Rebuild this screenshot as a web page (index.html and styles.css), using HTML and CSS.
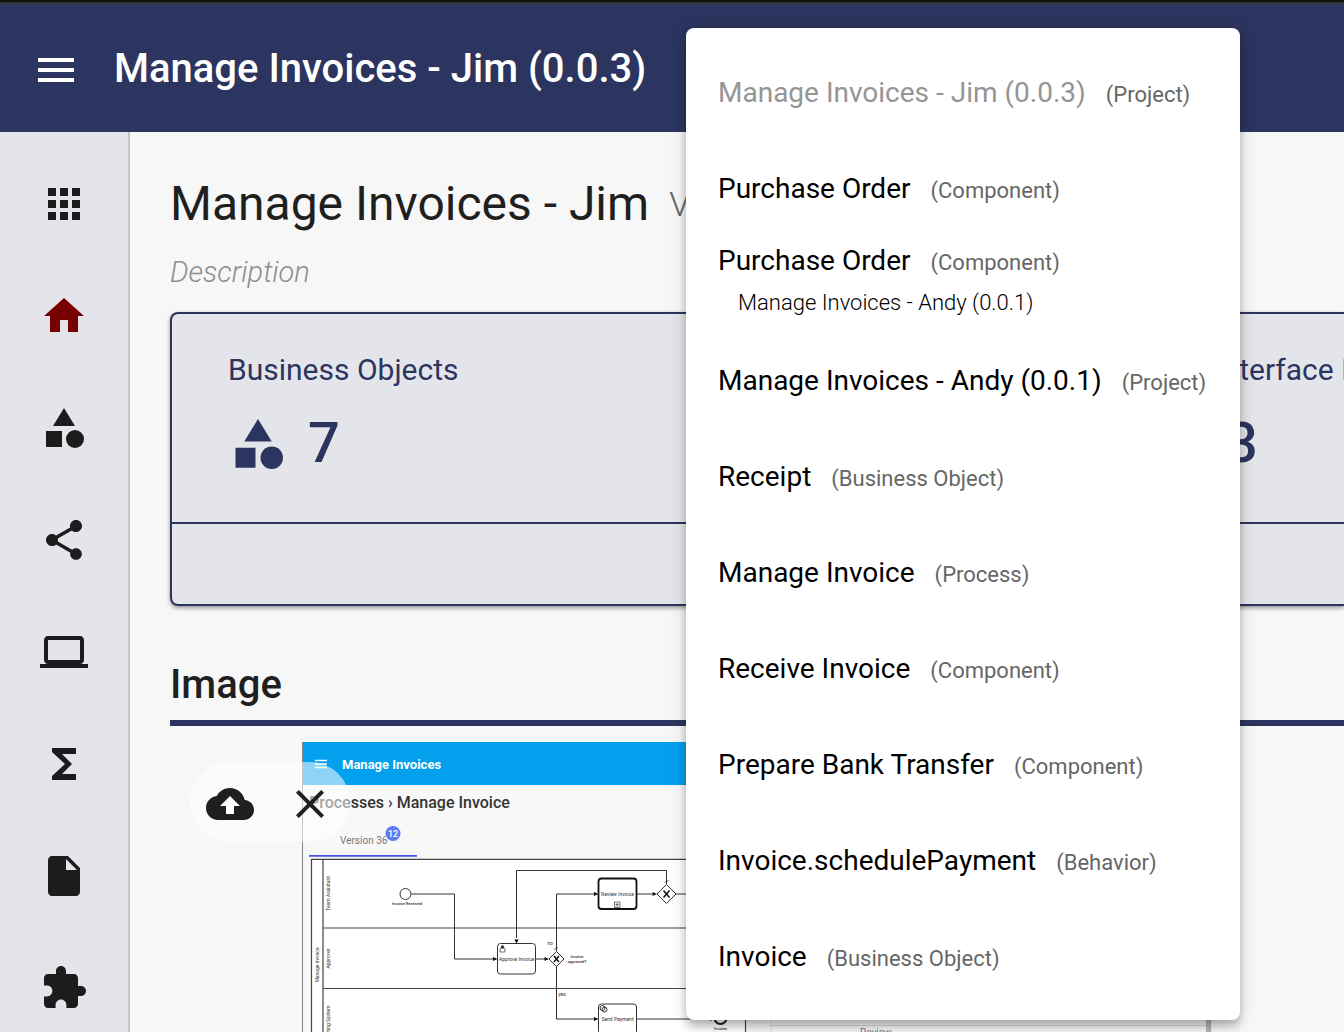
FILE: index.html
```html
<!DOCTYPE html>
<html lang="en">
<head>
<meta charset="utf-8">
<meta name="viewport" content="width=device-width, initial-scale=1">
<title>Manage Invoices - Jim (0.0.3)</title>
<link rel="stylesheet" href="styles.css">
</head>
<body>
<header class="topbar">
  <button class="icon-button" type="button" aria-label="Open menu"><svg class="icon" viewBox="0 0 24 24"><path d="M3 18h18v-2H3v2zm0-5h18v-2H3v2zm0-7v2h18V6H3z"/></svg></button>
  <span class="project-name">Manage Invoices - Jim (0.0.3)</span>
</header>

<div class="layout">
  <nav class="rail" aria-label="Sections">
    <a class="rail-link" href="#apps" aria-label="Apps"><svg class="icon" viewBox="0 0 24 24"><path d="M4 8h4V4H4v4zm6 12h4v-4h-4v4zm-6 0h4v-4H4v4zm0-6h4v-4H4v4zm6 0h4v-4h-4v4zm6-10v4h4V4h-4zm-6 4h4V4h-4v4zm6 6h4v-4h-4v4zm0 6h4v-4h-4v4z"/></svg></a>
    <a class="rail-link current" href="#home" aria-label="Home"><svg class="icon" viewBox="0 0 24 24"><path d="M10 20v-6h4v6h5v-8h3L12 3 2 12h3v8z"/></svg></a>
    <a class="rail-link" href="#objects" aria-label="Business objects"><svg class="icon" viewBox="0 0 24 24"><path d="M12 2l-5.5 9h11z"/><circle cx="17.5" cy="17.5" r="4.5"/><path d="M3 13.5h8v8H3z"/></svg></a>
    <a class="rail-link" href="#processes" aria-label="Processes"><svg class="icon" viewBox="0 0 24 24"><path d="M18 16.08c-.76 0-1.44.3-1.96.77L8.91 12.7c.05-.23.09-.46.09-.7s-.04-.47-.09-.7l7.05-4.11c.54.5 1.25.81 2.04.81 1.66 0 3-1.34 3-3s-1.34-3-3-3-3 1.34-3 3c0 .24.04.47.09.7L8.04 9.81C7.5 9.31 6.79 9 6 9c-1.66 0-3 1.34-3 3s1.34 3 3 3c.79 0 1.5-.31 2.04-.81l7.12 4.16c-.05.21-.08.43-.08.65 0 1.61 1.31 2.92 2.92 2.92s2.92-1.31 2.92-2.92-1.31-2.92-2.92-2.92z"/></svg></a>
    <a class="rail-link" href="#interfaces" aria-label="User interfaces"><svg class="icon" viewBox="0 0 24 24"><path d="M20 18c1.1 0 1.99-.9 1.99-2L22 6c0-1.100-.9-2-2-2H4c-1.100 0-2 .9-2 2v10c0 1.100.9 2 2 2H0v2h24v-2h-4zM4 6h16v10H4V6z"/></svg></a>
    <a class="rail-link" href="#behaviors" aria-label="Behaviors"><svg class="icon" viewBox="0 0 24 24"><path d="M18 4H6v2l6.500 6L6 18v2h12v-3h-7l5-5-5-5h7z"/></svg></a>
    <a class="rail-link" href="#documents" aria-label="Documents"><svg class="icon" viewBox="0 0 24 24"><path d="M6 2c-1.100 0-1.990.9-1.990 2L4 20c0 1.100.89 2 1.990 2H18c1.100 0 2-.9 2-2V8l-6-6H6zm7 7V3.500L18.500 9H13z"/></svg></a>
    <a class="rail-link" href="#extensions" aria-label="Extensions"><svg class="icon" viewBox="0 0 24 24"><path d="M20.500 11H19V7c0-1.100-.9-2-2-2h-4V3.500C13 2.120 11.880 1 10.500 1S8 2.120 8 3.500V5H4c-1.100 0-1.990.9-1.990 2v3.800H3.500c1.490 0 2.700 1.210 2.700 2.700s-1.210 2.700-2.700 2.700H2V20c0 1.100.9 2 2 2h3.800v-1.500c0-1.490 1.210-2.700 2.700-2.700 1.490 0 2.700 1.210 2.700 2.700V22H17c1.100 0 2-.9 2-2v-4h1.500c1.380 0 2.500-1.120 2.500-2.500S21.880 11 20.500 11z"/></svg></a>
  </nav>

  <main class="content">
    <div class="title-row">
      <h1 class="title">Manage Invoices - Jim</h1>
      <span class="version">V</span>
    </div>
    <p class="description">Description</p>

    <section class="card">
      <div class="stats">
        <div class="stat">
          <h2 class="stat-name">Business Objects</h2>
          <div class="stat-value"><svg class="stat-icon" viewBox="0 0 24 24"><path d="M12 2l-5.500 9h11z"/><circle cx="17.500" cy="17.500" r="4.500"/><path d="M3 13.500h8v8H3z"/></svg><span>7</span></div>
        </div>
        <div class="stat">
          <h2 class="stat-name">User Interface Flows</h2>
          <div class="stat-value"><svg class="stat-icon" viewBox="0 0 24 24"><path d="M20 18c1.100 0 2-.9 2-2V6c0-1.100-.9-2-2-2H4c-1.100 0-2 .9-2 2v10c0 1.100.9 2 2 2H0v2h24v-2h-4zM4 6h16v10H4V6z"/></svg><span>3</span></div>
        </div>
      </div>
      <div class="card-footer"></div>
    </section>

    <h2 class="section-title">Image</h2>
    <div class="image-area">
      <svg class="diagram" viewBox="302 742 910 290" role="img" aria-label="Manage Invoice process">
        <path fill="#f8f8f8" d="M302 742h912v290H302z"/>
        <path fill="#03a0ee" d="M302 742h912v43H302z"/>
        <path stroke="#7c868c" d="M302.500 742v290"/>
        <path stroke="#fff" stroke-width="1.300" d="M315 760.500h12M315 764h12M315 767.500h12"/>
        <text class="app-name" x="342" y="769">Manage Invoices</text>
        <text class="crumbs" x="309" y="808">Processes › Manage Invoice</text>
        <text class="tab" x="340" y="844">Version 36</text>
        <circle cx="393" cy="833.500" r="7.500" fill="#5f79f2"/>
        <text class="badge" x="393" y="837">12</text>
        <path fill="#4653e6" d="M309 855h108v1.800H309z"/>
        <path fill="#fff" stroke="#444" stroke-width="1.200" d="M311.500 859.300h434v190h-434z"/>
        <g fill="none" stroke="#444" stroke-width="1.200">
          <path d="M323 859v180M323 928h422M323 988.500h422"/>
        </g>
        <g fill="none" stroke="#333">
          <path d="M411.500 894h43v65H493M516.500 938v-67.500h150V884M535.500 959H546M556.500 951.500V894h38M556.500 966.500V1019h38M636.500 894H652M676 894h40M636.500 1019H715"/>
          <circle cx="405.500" cy="894" r="5.500" fill="#fff"/>
          <rect x="497.500" y="943.500" width="38" height="30.500" rx="3" fill="#fff"/>
          <rect x="598.500" y="878.500" width="38" height="30.500" rx="3" fill="#fff" stroke="#111" stroke-width="1.800"/>
          <rect x="598.500" y="1004" width="38" height="30.500" rx="3" fill="#fff"/>
          <path fill="#fff" d="M549 959l7.500-7.500 7.500 7.500-7.500 7.500zM657 894l9.500-9.500 9.500 9.500-9.500 9.500z"/>
          <path stroke="#111" stroke-width="1.500" d="M554 956l5 6m0-6l-5 6M663.500 890.500l6 7m0-7l-6 7"/>
          <path stroke-width=".7" d="M614.500 902h5.500v5.500h-5.500zM617.200 903v3.500M615.500 904.700h3.500M554 949.500l4-2M664.500 882.500l4-2M500 952v-3l1.500-1h2l1.500 1v3z"/>
          <circle cx="502.500" cy="947" r="1.300" fill="#333"/>
          <circle cx="602.500" cy="1008" r="2.500"/><circle cx="604.500" cy="1009.500" r="2.500"/>
          <circle cx="720.500" cy="1018" r="6" stroke="#222" stroke-width="2"/>
        </g>
        <path fill="#111" d="M493 957l4.500 2-4.500 2zM514.300 939.500h4.400l-2.200 4zM544.500 957l4.500 2-4.500 2zM594 892l4.500 2-4.500 2zM652.500 892l4.500 2-4.500 2zM594 1017l4.500 2-4.500 2zM710 1017l4.500 2-4.500 2z"/>
        <g class="labels">
          <text class="event" x="407" y="905">Invoice Received</text>
          <text x="516.500" y="960.500">Approve Invoice</text>
          <text x="617.500" y="895.500">Review Invoice</text>
          <text x="617.500" y="1020.500">Send Payment</text>
          <text class="event" x="577" y="957.500">Invoice</text>
          <text class="event" x="577" y="962.500">approved?</text>
          <text x="550" y="944.500">no</text>
          <text x="562" y="995.500">yes</text>
          <text class="event" x="720.500" y="1030">Invoice</text>
          <text transform="translate(330 893.500) rotate(-90)">Team Assistant</text>
          <text transform="translate(330 958.500) rotate(-90)">Approver</text>
          <text transform="translate(330 1027) rotate(-90)">Accounting System</text>
          <text transform="translate(319 965) rotate(-90)">Manage Invoice</text>
        </g>
        <path fill="#f7f7f7" stroke="#ddd" d="M771 1000h440v50H771z"/>
        <path stroke="#d8d8d8" d="M771 1025.500h435"/>
        <path fill="#b5b5b5" d="M1206 1000h5v32h-5z"/>
        <text class="tab" x="860" y="1036">Review</text>
      </svg>
      <div class="image-actions">
        <button class="icon-button" type="button" aria-label="Upload image"><svg class="icon" viewBox="0 0 24 24"><path d="M19.350 10.040C18.670 6.590 15.640 4 12 4 9.110 4 6.600 5.640 5.350 8.040 2.340 8.360 0 10.910 0 14c0 3.310 2.690 6 6 6h13c2.760 0 5-2.240 5-5 0-2.640-2.050-4.780-4.650-4.960z"/><path fill="#fff" d="M14 13v4h-4v-4H7l5-5 5 5h-3z"/></svg></button>
        <button class="icon-button" type="button" aria-label="Remove image"><svg class="icon" viewBox="0 0 24 24"><path d="M19 6.410L17.590 5 12 10.590 6.410 5 5 6.410 10.590 12 5 17.590 6.410 19 12 13.410 17.590 19 19 17.590 13.410 12z"/></svg></button>
      </div>
    </div>
  </main>
</div>

<ul class="recent-menu" aria-label="Recent items">
  <li><button class="item" type="button" disabled><span class="name">Manage Invoices - Jim (0.0.3)</span><span class="kind">(Project)</span></button></li>
  <li><button class="item" type="button"><span class="name">Purchase Order</span><span class="kind">(Component)</span></button></li>
  <li><button class="item" type="button"><span class="name">Purchase Order</span><span class="kind">(Component)</span><span class="parent">Manage Invoices - Andy (0.0.1)</span></button></li>
  <li><button class="item" type="button"><span class="name">Manage Invoices - Andy (0.0.1)</span><span class="kind">(Project)</span></button></li>
  <li><button class="item" type="button"><span class="name">Receipt</span><span class="kind">(Business Object)</span></button></li>
  <li><button class="item" type="button"><span class="name">Manage Invoice</span><span class="kind">(Process)</span></button></li>
  <li><button class="item" type="button"><span class="name">Receive Invoice</span><span class="kind">(Component)</span></button></li>
  <li><button class="item" type="button"><span class="name">Prepare Bank Transfer</span><span class="kind">(Component)</span></button></li>
  <li><button class="item" type="button"><span class="name">Invoice.schedulePayment</span><span class="kind">(Behavior)</span></button></li>
  <li><button class="item" type="button"><span class="name">Invoice</span><span class="kind">(Business Object)</span></button></li>
</ul>
</body>
</html>
```
FILE: styles.css
```css
* { box-sizing: border-box; }

body {
  margin: 0;
  height: 100vh;
  overflow: hidden;
  display: flex;
  flex-direction: column;
  background: #f7f7f7;
  color: #1f1f1f;
  font-family: Roboto, "Liberation Sans", sans-serif;
}

h1, h2, p, ul { margin: 0; padding: 0; }

.icon { display: block; width: 48px; height: 48px; fill: currentColor; }

.icon-button {
  padding: 0;
  border: 0;
  background: none;
  color: inherit;
  cursor: pointer;
}

/* Top bar */
.topbar {
  flex: none;
  display: flex;
  align-items: center;
  gap: 34px;
  height: 132px;
  padding: 6px 32px 0;
  border-top: 2px solid #111;
  box-shadow: inset 0 2px #333;
  background: #2c355f;
  color: #fff;
}

.project-name { padding-bottom: 2px; font-size: 40px; font-weight: 500; line-height: 48px; }

/* Side rail */
.layout { flex: 1; display: flex; min-height: 0; }

.rail {
  flex: none;
  width: 130px;
  padding-top: 16px;
  overflow: hidden;
  border-right: 2px solid #c3c3c8;
  background: #e4e5ea;
}

.rail-link {
  display: flex;
  align-items: center;
  justify-content: center;
  height: 112px;
  color: #1c1c1c;
}

.rail-link.current { color: #780000; }

/* Page content */
.content { flex: 1; min-width: 0; padding: 40px 0 0 40px; }

.title-row { display: flex; align-items: center; gap: 20px; height: 64px; }
.title { font-size: 48px; font-weight: 400; line-height: 64px; }
.version { color: #666; font-size: 34px; font-weight: 300; line-height: 64px; }

.description {
  margin: 18px 0 22px;
  color: #8d8d8d;
  font-size: 29px;
  font-style: italic;
  font-weight: 300;
  line-height: 36px;
}

.card {
  border: 2px solid #2c355f;
  border-right: 0;
  border-radius: 8px 0 0 8px;
  box-shadow: 0 2px 4px rgba(0, 0, 0, .4);
  background: #e4e5ea;
  color: #2c355f;
}

.stats { display: grid; grid-template-columns: 47fr 13fr; height: 208px; }
.stat { min-width: 0; padding: 36px 0 0 56px; overflow: hidden; }
.stat-name { font-size: 30px; font-weight: 400; line-height: 40px; white-space: nowrap; }
.stat-value { display: flex; gap: 20px; margin-top: 24px; font-size: 56px; font-weight: 500; line-height: 58px; }
.stat-icon { width: 60px; height: 60px; fill: currentColor; }
.card-footer { height: 82px; border-top: 2px solid #2c355f; }

.section-title {
  margin-top: 55px;
  padding-bottom: 11px;
  border-bottom: 6px solid #2c355f;
  font-size: 40px;
  font-weight: 500;
  line-height: 48px;
}

/* Process picture with its actions on top */
.image-area { position: relative; padding-top: 16px; }
.diagram { display: block; width: 100%; max-width: 910px; margin: 0 auto; }
.diagram text { fill: #333; }
.diagram .app-name { fill: #fff; font-size: 13px; font-weight: 700; }
.diagram .crumbs { font-size: 16px; font-weight: 500; }
.diagram .tab { fill: #777; font-size: 10px; }
.diagram .badge { fill: #fff; font-size: 9px; font-weight: 500; text-anchor: middle; }
.labels { font-size: 5px; text-anchor: middle; }
.labels .event { font-size: 4px; font-weight: 500; }

.image-actions {
  position: absolute;
  top: 36px;
  left: 20px;
  display: flex;
  align-items: center;
  gap: 32px;
  height: 80px;
  padding: 4px 16px 0;
  border-radius: 40px;
  background: rgba(255, 255, 255, .55);
}

/* Recent items */
.recent-menu {
  position: absolute;
  top: 28px;
  left: 686px;
  min-width: 554px;
  padding: 16px 0;
  list-style: none;
  border-radius: 8px;
  background: #fff;
  box-shadow: 0 4px 8px -2px rgba(0, 0, 0, .2), 0 8px 10px rgba(0, 0, 0, .14), 0 2px 20px rgba(0, 0, 0, .12);
}

.item {
  display: grid;
  grid-template-columns: auto auto;
  justify-content: start;
  align-content: center;
  align-items: baseline;
  column-gap: 20px;
  width: 100%;
  height: 96px;
  padding: 4px 32px 0;
  border: 0;
  background: none;
  color: #000;
  font: 400 28px/48px Roboto, "Liberation Sans", sans-serif;
  text-align: left;
  cursor: pointer;
}

.item:disabled .name { color: #959595; }
.item .kind { color: #666; font-size: 22px; }
.item .parent { grid-column: 1 / -1; padding-left: 20px; font-size: 22px; font-weight: 300; line-height: 32px; }
.item:has(.parent) { align-content: start; padding-top: 1px; }
```
